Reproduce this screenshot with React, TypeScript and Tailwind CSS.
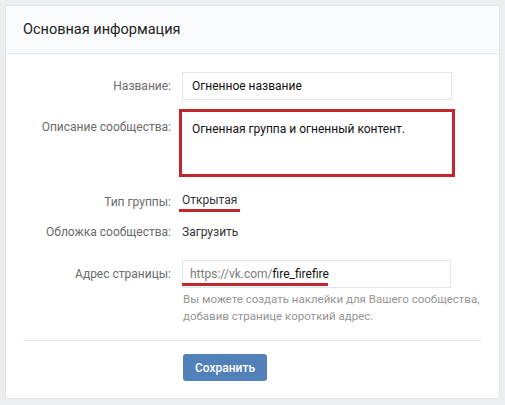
const font = { fontFamily: "Roboto, 'Open Sans', Arial, sans-serif" };

function Label({ children }: { children: React.ReactNode }) {
  return (
    <div className="w-[149px] shrink-0 pr-[1px] text-right text-[12px] leading-[18px] text-[#6b6b6b]">
      {children}
    </div>
  );
}

export default function App() {
  return (
    <div className="w-[505px] h-[405px] bg-[#edeef0] p-[5px]" style={font}>
      <div className="rounded-[2px] border border-[#e1e3e7] bg-white">
        <div className="h-[48px] flex items-center px-[17px] bg-[#fafbfc] border-b border-[#e7e8ec] text-[14.5px] text-[#222]">
          Основная информация
        </div>

        <div className="px-[17px] pt-[18px] pb-[17px]">
          {/* название */}
          <div className="flex items-center gap-[10px]">
            <Label>Название:</Label>
            <div className="w-[270px] h-[28px] border border-[#e1e4e8] flex items-center px-[9px] text-[12px] text-[#111]">
              Огненное название
            </div>
          </div>

          {/* описание */}
          <div className="flex items-start gap-[10px] mt-[9px]">
            <div className="pt-[9px]">
              <Label>Описание сообщества:</Label>
            </div>
            <div className="-ml-[3px] w-[276px] h-[68px] border-[3px] border-[#c4262e] px-[10px] pt-[8px] text-[12px] leading-[18px] text-[#111]">
              Огненная группа и огненный контент.
            </div>
          </div>

          {/* тип группы */}
          <div className="flex items-center gap-[10px] mt-[14px]">
            <Label>Тип группы:</Label>
            <span className="-ml-[3px] px-[3px] text-[12px] leading-[18px] text-[#333] border-b-[3px] border-[#c4262e]">
              Открытая
            </span>
          </div>

          {/* обложка */}
          <div className="flex items-center gap-[10px] mt-[11px]">
            <Label>Обложка сообщества:</Label>
            <span className="text-[12px] leading-[18px] text-[#333]">Загрузить</span>
          </div>

          {/* адрес */}
          <div className="flex items-center gap-[10px] mt-[19px]">
            <Label>Адрес страницы:</Label>
            <div className="relative w-[269px] h-[28px] border border-[#e1e4e8] flex items-center px-[7px] text-[12px]">
              <span className="text-[#7a7a7a]">https://vk.com/</span>
              <span className="text-[#111]">fire_firefire</span>
              <span className="absolute left-[-1px] bottom-[1px] w-[146px] h-[3px] bg-[#c4262e]" />
            </div>
          </div>
          <div className="ml-[160px] mt-[3px] w-[300px] text-[11.5px] leading-[17px] text-[#959595]">
            Вы можете создать наклейки для Вашего сообщества, добавив странице короткий адрес.
          </div>

          <div className="mt-[15px] border-t border-[#e7e8ec]" />

          <div className="ml-[160px] mt-[13px]">
            <button className="h-[27px] w-[84px] rounded-[3px] bg-[#5181b8] text-white text-[12px] font-medium">
              Сохранить
            </button>
          </div>
        </div>
      </div>
    </div>
  );
}
